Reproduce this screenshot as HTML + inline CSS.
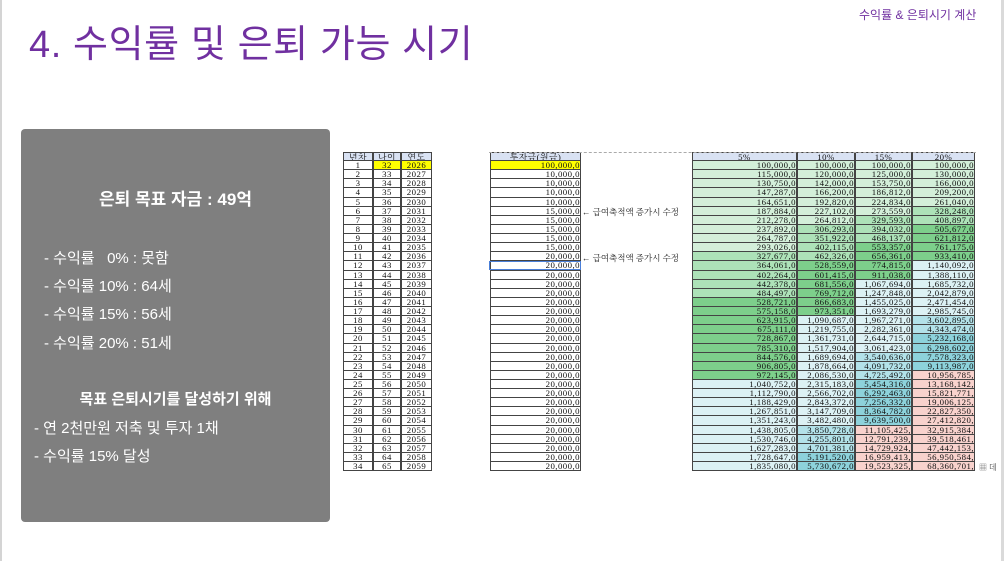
<!DOCTYPE html>
<html><head><meta charset="utf-8">
<style>
html,body{margin:0;padding:0}
body{width:1004px;height:561px;position:relative;overflow:hidden;background:#fff;font-family:"Liberation Sans","Noto Sans CJK KR",sans-serif}
.lb{position:absolute;left:0;top:0;width:2px;height:561px;background:#d4d4d4}
.rb{position:absolute;left:1001px;top:0;width:3px;height:561px;background:#dadada}
.title{position:absolute;left:29px;top:13px;font-size:38px;color:#7030a0;letter-spacing:0.6px;white-space:nowrap}
.sub{position:absolute;left:859px;top:6px;font-size:12px;color:#7030a0;white-space:nowrap}
.panel{position:absolute;left:21px;top:129px;width:309px;height:393px;background:#7f7f7f;border-radius:4px;color:#fff}
.panel div{position:absolute;white-space:nowrap}
.t{font-size:17px;font-weight:bold;left:0;width:309px;text-align:center}
.l{font-size:15px}
.c{position:absolute;height:9.12px;box-sizing:border-box;border:0.7px solid #444;border-top:none;font-family:"Liberation Serif","Noto Serif CJK SC",serif;font-size:8.8px;line-height:9px;letter-spacing:0.45px;overflow:hidden;white-space:nowrap;color:#111}
.h{background:#d9e2f3;text-align:center;border-top:0.7px solid #444}
.ctr{text-align:center}
.r{text-align:right;padding-right:0}
.note{position:absolute;left:582px;font-family:"Liberation Serif","Noto Serif CJK SC",serif;font-size:8.5px;color:#222;white-space:nowrap}
</style></head><body>
<div class="lb"></div><div class="rb"></div>
<div class="title">4. 수익률 및 은퇴 가능 시기</div>
<div class="sub">수익률 &amp; 은퇴시기 계산</div>
<div class="panel">
<div class="t" style="top:56px">은퇴 목표 자금 : 49억</div>
<div class="l" style="left:23px;top:118px">- 수익률 &nbsp;&nbsp;0% : 못함</div>
<div class="l" style="left:23px;top:146px">- 수익률 10% : 64세</div>
<div class="l" style="left:23px;top:174px">- 수익률 15% : 56세</div>
<div class="l" style="left:23px;top:203px">- 수익률 20% : 51세</div>
<div class="t" style="top:259px;font-size:15px">목표 은퇴시기를 달성하기 위해</div>
<div class="l" style="left:13px;top:288px">- 연 2천만원 저축 및 투자 1채</div>
<div class="l" style="left:13px;top:316px">- 수익률 15% 달성</div>
</div>
<div id="sheet"></div>
<div class="note" style="top:206px">← 급여축적액 증가시 수정</div>
<div class="note" style="top:252px">← 급여축적액 증가시 수정</div>
<div style="position:absolute;left:489px;top:152px;width:487px;border-top:1px dashed #aaa"></div>
<div style="position:absolute;left:979px;top:462px;font-size:8px;color:#666">▦ 데</div>
<script>
var s='',H=9.12,T0=152;
function cell(x,y,w,cls,txt,bg){s+='<div class="c '+cls+'" style="left:'+x+'px;top:'+y+'px;width:'+w+'px'+(bg?';background:'+bg:'')+'">'+txt+'</div>';}
function fmt(v){var p=v.toFixed(2).split('.');return p[0].replace(/\B(?=(\d{3})+(?!\d))/g,',')+'.'+p[1];}
function col(v){if(v<300000)return'#d3efd9';if(v<500000)return'#ade2b8';if(v<1000000)return'#7dcf8b';if(v<3500000)return'#dcf1f4';if(v<5000000)return'#b3e2e9';if(v<10000000)return'#8dd2db';return'#f8d2cd';}
cell(343,T0,30,'h','년차');cell(373,T0,28,'h','나이');cell(401,T0,31,'h','연도');
cell(490,T0,91,'h','투자금(원금)');
var rx=[692,797,855,912],rw=[105,58,57,63],rates=[0.05,0.10,0.15,0.20];
for(var k=0;k<4;k++)cell(rx[k],T0,rw[k],'h',(rates[k]*100)+'%');
var v=[0,0,0,0];
for(var i=1;i<=34;i++){
 var y=T0+H*i;
 var inv=i==1?100000:(i<=5?10000:(i<=10?15000:20000));
 cell(343,y,30,'ctr',i);cell(373,y,28,'ctr',31+i,i==1?'#ffff00':'');cell(401,y,31,'ctr',2025+i,i==1?'#ffff00':'');
 cell(490,y,91,'r',fmt(inv).replace(/,/g,',').slice(0,-2).replace(/\.$/,',0'),i==1?'#ffff00':'');
 for(var k=0;k<4;k++){v[k]=i==1?100000:v[k]*(1+rates[k])+inv;var t=fmt(v[k]).split('.')[0];var d=t+',0';var mx=(k==0)?12:11;cell(rx[k],y,rw[k],'r',d.slice(0,Math.min(mx,d.length)),col(v[k]));}
}
document.getElementById('sheet').innerHTML=s;
</script>
<div style="position:absolute;left:489px;top:261px;width:92px;height:9px;border:1px solid #4a7fd8;box-sizing:border-box"></div>
</body></html>
